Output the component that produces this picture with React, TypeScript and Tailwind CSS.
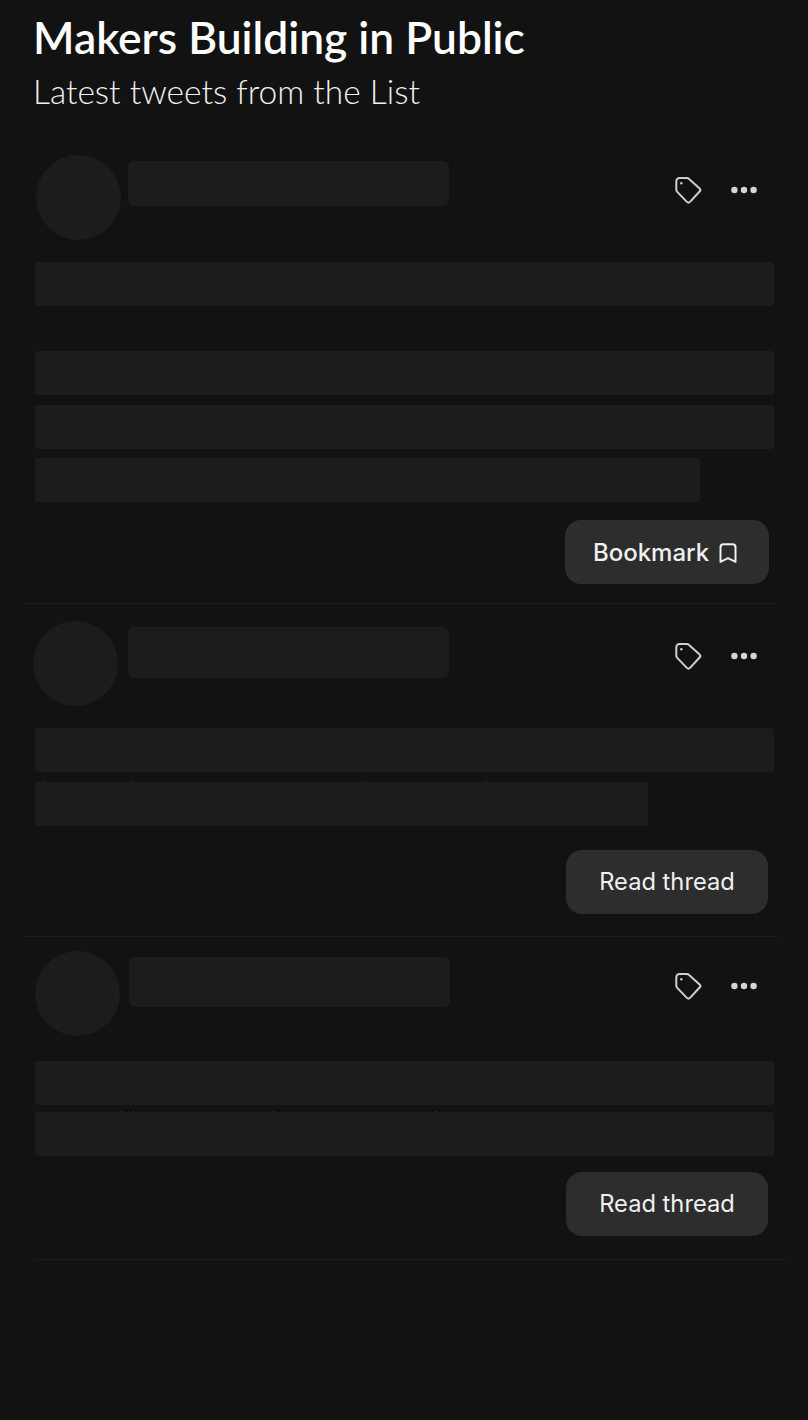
import React from 'react';

interface TweetProps {
  className: string;
  avatarClass: string;
  nameClass: string;
  linesClass: string;
  buttonClass: string;
  dividerClass?: string;
  isBookmark?: boolean;
  children: React.ReactNode;
}

const Line = ({
  className = 'w-[739px]',
  specks = [],
}: {
  className?: string;
  specks?: number[];
}) => (
  <div className={`relative h-11 rounded-[3px] bg-[#1c1c1c] ${className}`}>
    {specks.map(left => (
      <span
        key={left}
        className="absolute top-[-1px] w-px h-px bg-[#3c3c3c]"
        style={{ left }}
      />
    ))}
  </div>
);

const TagIcon = () => (
  <svg width="30" height="30" viewBox="0 0 30 30" fill="none" stroke="#cfcfcf" strokeWidth="2" strokeLinejoin="round">
    <path d="M6.5 3H14a2.5 2.5 0 0 1 1.8.8L26.6 13.4a2.2 2.2 0 0 1 0 3.1L17 26.9a2.2 2.2 0 0 1-3.1 0L4 16.6a2.5 2.5 0 0 1-.7-1.8V6.2A3.2 3.2 0 0 1 6.5 3Z" />
    <circle cx="8.3" cy="8.3" r="1.2" fill="#cfcfcf" stroke="none" />
  </svg>
);

const BookmarkIcon = () => (
  <svg width="18" height="20" viewBox="0 0 18 20" fill="none" stroke="#f0f0f0" strokeWidth="2" strokeLinejoin="round">
    <path d="M1.5 18.8V4.2A3 3 0 0 1 4.5 1.2h9a3 3 0 0 1 3 3v14.6L9 15.2Z" />
  </svg>
);

const Dots = () => (
  <svg width="26" height="8" viewBox="0 0 26 8" fill="#d4d4d4">
    <circle cx="3.4" cy="4" r="3.2" />
    <circle cx="13" cy="4" r="3.2" />
    <circle cx="22.6" cy="4" r="3.2" />
  </svg>
);

const Tweet: React.FC<TweetProps> = ({
  className,
  avatarClass,
  nameClass,
  linesClass,
  buttonClass,
  dividerClass = '',
  isBookmark,
  children,
}) => (
  <div className={`w-[754px] ml-6 flex flex-col ${className}`}>
    <div className="flex items-start">
      <div className={`w-[85px] h-[85px] rounded-full bg-[#1c1c1c] shrink-0 ${avatarClass}`} />
      <div className={`w-[321px] rounded-md bg-[#1c1c1c] ${nameClass}`} />
      <div className="flex items-center ml-auto mr-[21px] mt-[21px] gap-[28px] h-7">
        <TagIcon />
        <Dots />
      </div>
    </div>
    <div className={linesClass}>{children}</div>
    <div className={`flex justify-end ${buttonClass}`}>
      <button
        className={`h-16 rounded-2xl bg-[#2d2d2d] text-[#f0f0f0] flex items-center justify-center ${
          isBookmark ? 'w-[204px] gap-[10px] font-medium text-[24px] pt-[2px] pr-1' : 'w-[202px] text-[23.7px]'
        }`}
      >
        {isBookmark ? 'Bookmark' : 'Read thread'}
        {isBookmark && <BookmarkIcon />}
      </button>
    </div>
    <div className={`w-[754px] h-px mt-auto shrink-0 bg-[#1c1c1c] ${dividerClass}`} />
  </div>
);

export default function App() {
  return (
    <div className="h-[1420px] bg-[#121212] overflow-hidden font-['Inter',sans-serif]">
      <div className="pl-[33px] pt-[11px] font-['Lato',sans-serif]">
        <h1 className="text-[44.3px] leading-[52px] font-semibold text-white">Makers Building in Public</h1>
        <p className="text-[33.5px] leading-[40px] font-light text-[#f0f0f0] mt-2">Latest tweets from the List</p>
      </div>

      <Tweet
        className="mt-[44px] h-[449px]"
        avatarClass="ml-3"
        nameClass="ml-[7px] mt-[6px] h-[45px]"
        linesClass="mt-[22px] ml-[11px]"
        buttonClass="mt-[18px] mr-[9px]"
        isBookmark
      >
        <Line />
        <Line className="w-[739px] mt-[45px]" />
        <Line className="w-[739px] mt-[10px]" />
        <Line className="w-[665px] mt-[9px]" />
      </Tweet>

      <Tweet
        className="mt-[17px] h-[316px]"
        avatarClass="ml-[9px]"
        nameClass="ml-[10px] mt-[6px] h-[51px]"
        linesClass="mt-[22px] ml-[11px]"
        buttonClass="mt-6 mr-[10px]"
      >
        <Line />
        <Line className="w-[613px] mt-[10px]" specks={[8, 97, 327, 451]} />
      </Tweet>

      <Tweet
        className="mt-[14px] h-[309px]"
        avatarClass="ml-[11px]"
        nameClass="ml-[9px] mt-[6px] h-[50px]"
        linesClass="mt-[25px] ml-[11px]"
        buttonClass="mt-4 mr-[10px]"
        dividerClass="ml-[10px]"
      >
        <Line />
        <Line className="w-[739px] mt-[7px]" specks={[86, 98, 238, 400]} />
      </Tweet>
    </div>
  );
}
